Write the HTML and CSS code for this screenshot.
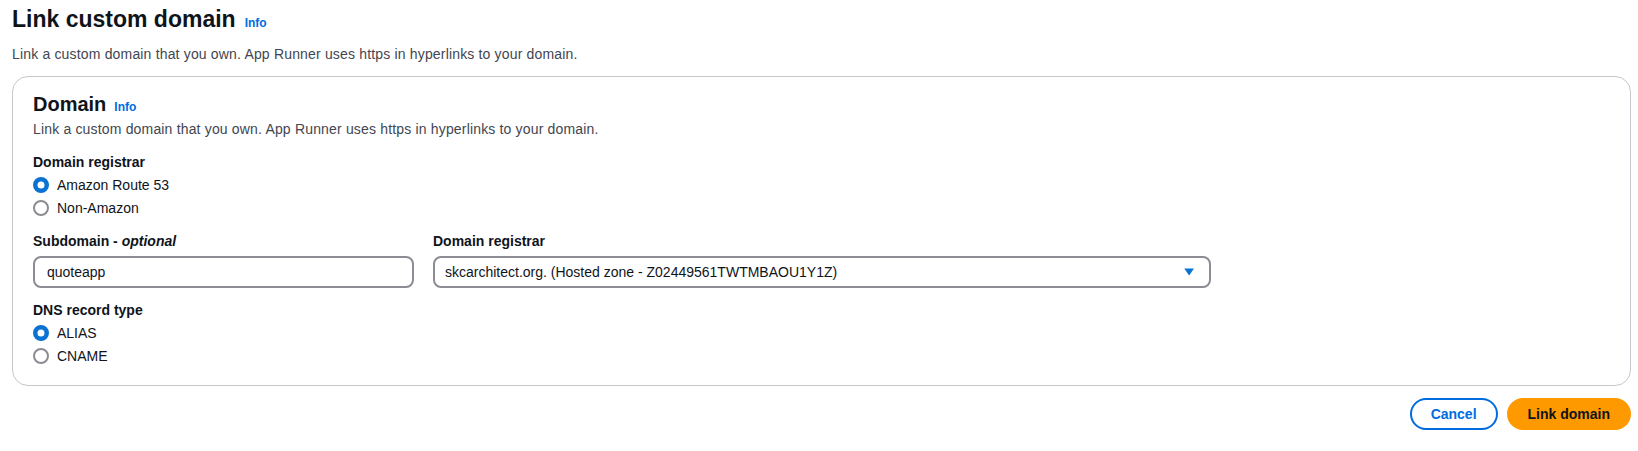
FILE: index.html
```html
<!DOCTYPE html>
<html lang="en">
<head>
<meta charset="utf-8">
<title>Link custom domain</title>
<link rel="stylesheet" href="styles.css">
</head>
<body>
<div class="page">
  <div class="page-header">
    <h1 class="title">Link custom domain</h1>
    <a class="info" href="#">Info</a>
  </div>
  <p class="page-desc">Link a custom domain that you own. App Runner uses https in hyperlinks to your domain.</p>

  <section class="card">
    <div class="card-header">
      <h2 class="card-title">Domain</h2>
      <a class="info" href="#">Info</a>
    </div>
    <p class="card-desc">Link a custom domain that you own. App Runner uses https in hyperlinks to your domain.</p>

    <div class="field">
      <div class="label">Domain registrar</div>
      <div class="radios">
        <label class="radio">
          <svg class="radio-icon" viewBox="0 0 16 16" width="16" height="16"><circle cx="8" cy="8" r="5.75" fill="#fff" stroke="#0972d3" stroke-width="4.5"/></svg>
          <span>Amazon Route 53</span>
        </label>
        <label class="radio">
          <svg class="radio-icon" viewBox="0 0 16 16" width="16" height="16"><circle cx="8" cy="8" r="7" fill="#fff" stroke="#8c8c94" stroke-width="2"/></svg>
          <span>Non-Amazon</span>
        </label>
      </div>
    </div>

    <div class="columns">
      <div class="field-col">
        <div class="label">Subdomain - <i>optional</i></div>
        <div class="input">quoteapp</div>
      </div>
      <div class="field-col">
        <div class="label">Domain registrar</div>
        <div class="select">
          <span class="select-text">skcarchitect.org. (Hosted zone - Z02449561TWTMBAOU1Y1Z)</span>
          <svg class="caret" viewBox="0 0 16 16" width="16" height="16"><path d="M3.25 4.5h9.75l-4.875 7z" fill="#0972d3"/></svg>
        </div>
      </div>
    </div>

    <div class="field field-last">
      <div class="label">DNS record type</div>
      <div class="radios">
        <label class="radio">
          <svg class="radio-icon" viewBox="0 0 16 16" width="16" height="16"><circle cx="8" cy="8" r="5.75" fill="#fff" stroke="#0972d3" stroke-width="4.5"/></svg>
          <span>ALIAS</span>
        </label>
        <label class="radio">
          <svg class="radio-icon" viewBox="0 0 16 16" width="16" height="16"><circle cx="8" cy="8" r="7" fill="#fff" stroke="#8c8c94" stroke-width="2"/></svg>
          <span>CNAME</span>
        </label>
      </div>
    </div>
  </section>

  <div class="actions">
    <button class="btn btn-normal" type="button">Cancel</button>
    <button class="btn btn-primary" type="button">Link domain</button>
  </div>
</div>
</body>
</html>
```

FILE: styles.css
```css
* {
  box-sizing: border-box;
}

html, body {
  margin: 0;
  padding: 0;
  background: #ffffff;
}

body {
  font-family: "Liberation Sans", Arial, sans-serif;
  font-size: 14px;
  line-height: 20px;
  color: #0f141a;
}

.page {
  padding: 4px 7px 0 12px;
}

.page-header {
  display: flex;
  align-items: baseline;
  gap: 9px;
}

.title {
  margin: 0;
  font-size: 23px;
  line-height: 30px;
  font-weight: 700;
  color: #0f141a;
}

.info {
  font-size: 12px;
  line-height: 16px;
  font-weight: 700;
  color: #006ce0;
  text-decoration: none;
}

.page-desc {
  margin: 10px 0 0;
  color: #424650;
  font-size: 14px;
  line-height: 20px;
  letter-spacing: 0.17px;
}

.card {
  margin-top: 12px;
  border: 1px solid #c6c6cd;
  border-radius: 16px;
  padding: 15px 20px 18px 20px;
  background: #ffffff;
}

.card-header {
  display: flex;
  align-items: baseline;
  gap: 8px;
}

.card-title {
  margin: 0;
  font-size: 20px;
  line-height: 24px;
  font-weight: 700;
  color: #0f141a;
}

.card-desc {
  margin: 3px 0 0;
  color: #424650;
  font-size: 14px;
  line-height: 20px;
  letter-spacing: 0.17px;
}

.field {
  margin-top: 12px;
}

.label {
  font-weight: 700;
  font-size: 14px;
  line-height: 22px;
  color: #0f141a;
}

.label i {
  font-style: italic;
}

.radios {
  display: flex;
  flex-direction: column;
  gap: 1px;
  margin-top: 1px;
}

.radio {
  display: flex;
  align-items: center;
  gap: 8px;
  height: 22px;
  font-size: 14px;
  color: #0f141a;
}

.radio-icon {
  display: block;
  flex: none;
}

.columns {
  display: grid;
  grid-template-columns: 381px 778px;
  column-gap: 19px;
  margin-top: 11px;
}

.field-col {
  display: flex;
  flex-direction: column;
  gap: 4px;
}

.input,
.select {
  height: 32px;
  border: 2px solid #8c8c94;
  border-radius: 8px;
  padding: 0 12px;
  display: flex;
  align-items: center;
  font-size: 14px;
  color: #0f141a;
  background: #ffffff;
}

.select {
  justify-content: space-between;
  padding-left: 10px;
  padding-right: 12px;
}

.caret {
  display: block;
  flex: none;
}

.field-last {
  margin-top: 11px;
}

.actions {
  display: flex;
  justify-content: flex-end;
  gap: 9px;
  margin-top: 12px;
}

.btn {
  height: 32px;
  border-radius: 20px;
  font-family: "Liberation Sans", Arial, sans-serif;
  font-size: 14px;
  font-weight: 700;
  line-height: 20px;
  padding: 0 19px;
  cursor: pointer;
}

.btn-normal {
  background: #ffffff;
  border: 2px solid #006ce0;
  color: #006ce0;
}

.btn-primary {
  background: #ff9900;
  border: 2px solid #ff9900;
  color: #0f141a;
}
```
